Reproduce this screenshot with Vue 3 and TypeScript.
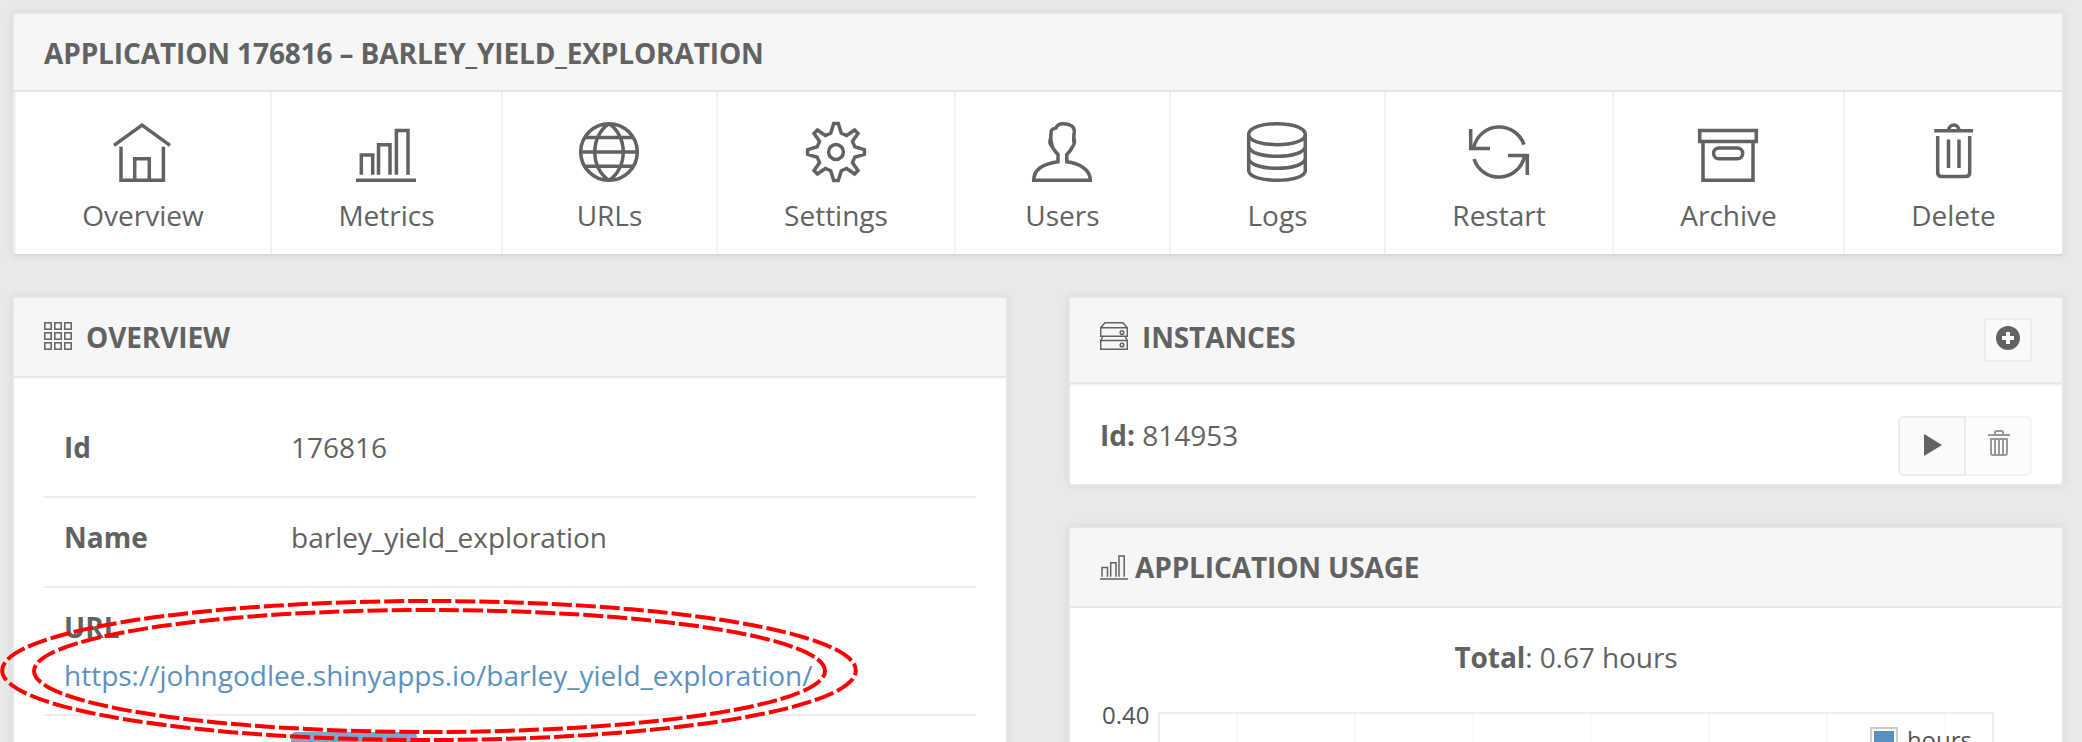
<script setup lang="ts">
interface NavItem {
  label: string
  icon: string
}

const navItems: NavItem[] = [
  { label: 'Overview', icon: 'M2 23.4L30 3.2L58 23.4M9 24.7V58.2H51.4V24.7M22.7 58V36.7H37.3V58' },
  { label: 'Metrics', icon: 'M0 58.2H60M5.3 52.7V33H16.7V52.7M22.5 52.7V22.7H34V52.7M40.4 52.7V8.5H52V52.7' },
  {
    label: 'URLs',
    icon: 'M30 1.7A28.3 28.3 0 1 0 30 58.3A28.3 28.3 0 1 0 30 1.7M30 1.7C11 14 11 46 30 58.3M30 1.7C49 14 49 46 30 58.3M6 15.5H54M1.7 30H58.3M6 44.3H54',
  },
  {
    label: 'Settings',
    icon: 'M27.7 1.6H32.3L35.3 11.3L40.7 13.5L48.6 8L52 11.4L46.5 19.3L48.7 24.7L58.4 27.7V32.3L48.7 35.3L46.5 40.7L52 48.6L48.6 52L40.7 46.5L35.3 48.7L32.3 58.4H27.7L24.7 48.7L19.3 46.5L11.4 52L8 48.6L13.5 40.7L11.3 35.3L1.6 32.3V27.7L11.3 24.7L13.5 19.3L8 11.4L11.4 8L19.3 13.5L24.7 11.3ZM30 22.6A7.4 7.4 0 1 0 30 37.4A7.4 7.4 0 1 0 30 22.6Z',
  },
  {
    label: 'Users',
    icon: 'M1.7 58.3C1.7 46 14 41.5 26 39.8V32.5C23.5 30 21.5 27.5 20.3 24.8C18 22.5 17.6 21 18 19L19.3 20.3C18.2 16 19 12 19.2 9.2C19.8 6.6 22 7 24 6C24.8 3.2 27 1.7 31 1.7C37.5 1.7 42.8 4 42.3 10C41.5 13.5 41.8 17 41.7 20.3L42.4 19C42.8 22 41.8 23.3 40 25.5C38.8 28.5 37 30.5 34.8 32.5V39.8C46 41.3 58.3 46.5 58.3 58.3Z',
  },
  {
    label: 'Logs',
    icon: 'M1.7 12.5C1.7 -2 58.3 -2 58.3 12.5C58.3 26 1.7 26 1.7 12.5V48.5C1.7 61.5 58.3 61.5 58.3 48.5V12.5M1.7 24C1.7 37.8 58.3 37.8 58.3 24M1.7 36C1.7 49.8 58.3 49.8 58.3 36',
  },
  {
    label: 'Restart',
    icon: 'M4.8 25A26.2 26.2 0 0 1 55 22.6M1.7 7V26.4H21M5 37A26.2 26.2 0 0 0 55.5 34.5M39 33.4H58.3V53',
  },
  {
    label: 'Archive',
    icon: 'M1.7 8.6H58.3V19.6H1.7ZM5 19.6V58.3H55V19.6M21 26H39.3A5.4 5.4 0 0 1 39.3 36.8H21A5.4 5.4 0 0 1 21 26Z',
  },
  {
    label: 'Delete',
    icon: 'M11.3 8.7H50.1M25.7 8.7C25.7 1.2 35.9 1.2 35.9 8.7M14.7 14V50.5Q14.7 54.5 18.7 54.5H42.7Q46.7 54.5 46.7 50.5V14M25.5 17.5V46M36 17.5V46',
  },
]

const gridLines: number[] = [77, 195, 313, 431, 549, 667, 785]
const cells: number[] = [0, 1, 2]
</script>

<template>
  <main class="page">
    <section class="panel app-panel">
      <header class="panel-head app-head">Application 176816 – barley_yield_exploration</header>
      <nav class="nav">
        <a v-for="item in navItems" :key="item.label" class="nav-item">
          <svg class="nav-icon" viewBox="0 0 60 60"><path :d="item.icon" /></svg>
          <span>{{ item.label }}</span>
        </a>
      </nav>
    </section>

    <div class="columns">
      <section class="panel overview">
        <header class="panel-head">
          <svg class="head-icon" viewBox="0 0 28 28">
            <template v-for="r in cells" :key="r">
              <rect v-for="c in cells" :key="c" :x="c * 10 + 0.8" :y="r * 10 + 0.8" width="6.4" height="6.4" />
            </template>
          </svg>
          <span class="title">Overview</span>
        </header>
        <div class="rows">
          <div class="row"><b class="key">Id</b><span>176816</span></div>
          <div class="row"><b class="key">Name</b><span>barley_yield_exploration</span></div>
          <div class="row url-row">
            <b class="key">URL</b>
            <a class="link">https://johngodlee.shinyapps.io/barley_yield_exploration/</a>
          </div>
          <div class="row status-row"><span class="status"></span></div>
        </div>
      </section>

      <div class="side">
        <section class="panel">
          <header class="panel-head tall">
            <svg class="head-icon" viewBox="0 0 28 28">
              <path d="M.7 5.8L5 .8H23L27.3 5.8V14.2H.7ZM.7 5.8H27.3M2.6 15L.7 18.6V27.3H27.3V18.6L25.4 15M.7 18.6H27.3" />
              <circle cx="22" cy="10.6" r="1.8" />
              <circle cx="22" cy="23" r="1.8" />
            </svg>
            <span class="title">Instances</span>
            <button class="add" type="button">
              <svg viewBox="0 0 24 24">
                <circle cx="12" cy="12" r="12" />
                <path d="M10 6h4v4h4v4h-4v4h-4v-4H6v-4h4z" />
              </svg>
            </button>
          </header>
          <div class="instance">
            <p><b>Id:</b> 814953</p>
            <div class="actions">
              <button class="act play" type="button">
                <svg viewBox="0 0 18 22"><path d="M0 0L18 11L0 22z" /></svg>
              </button>
              <button class="act trash" type="button">
                <svg viewBox="0 0 22 26">
                  <path d="M0 5H22M7 5V2.5Q7 1 8.500 1H13.500Q15 1 15 2.500V5M3 9H19V23Q19 25 17 25H5Q3 25 3 23ZM7 9V25M11 9V25M15 9V25" />
                </svg>
              </button>
            </div>
          </div>
        </section>

        <section class="panel usage">
          <header class="panel-head">
            <svg class="head-icon" viewBox="0 0 28 28">
              <path d="M0 27H28M2 24.700V15.600H7.500V24.700M10.700 24.700V10.700H16V24.700M19 24.700V4H24.200V24.700" />
            </svg>
            <span class="title close">Application Usage</span>
          </header>
          <p class="total"><b>Total</b>: 0.67 hours</p>
          <div class="chart">
            <span class="tick">0.40</span>
            <div class="plot">
              <svg class="grid" viewBox="0 0 832 200">
                <path v-for="x in gridLines" :key="x" :d="`M${x} 0V200`" />
              </svg>
              <div class="legend"><i class="swatch"></i><span class="series">hours</span></div>
            </div>
          </div>
        </section>
      </div>
    </div>

    <svg class="marker" viewBox="0 0 2082 742">
      <ellipse cx="429" cy="670.500" rx="426.800" ry="69.500" stroke-dashoffset="15" />
      <ellipse cx="429.500" cy="671" rx="395.500" ry="61" stroke-dashoffset="13" />
    </svg>
  </main>
</template>

<style>
body {
  margin: 0;
  overflow: hidden;
}
</style>

<style scoped>
.page {
  position: relative;
  box-sizing: border-box;
  width: 2082px;
  height: 742px;
  padding: 12px 18px 0 12px;
  overflow: hidden;
  background: #e9e9e9;
  color: #626262;
  font: 28px/40px 'Open Sans', 'Noto Sans', sans-serif;
}

p {
  margin: 0;
}

.panel {
  border: 2px solid #e6e6e6;
  border-radius: 4px;
  background: #fff;
  box-shadow: 0 0 8px rgba(0, 0, 0, 0.08);
}

.app-panel {
  height: 240px;
  width: 2048px;
  border-bottom: 2px solid #d9d9d9;
}

.panel-head {
  display: flex;
  box-sizing: border-box;
  height: 80px;
  padding: 19px 30px 0;
  border-bottom: 2px solid #e8e8e8;
  background: #f6f6f6;
  font-weight: 700;
  letter-spacing: -0.12px;
  text-transform: uppercase;
}

.app-head {
  height: 78px;
  border-bottom-color: #e4e4e4;
}

.nav {
  display: grid;
  grid-template-columns: 258px 231px 215px 238px 215px 215px 228px 231px 217px;
  height: 162px;
}

.nav-item {
  display: flex;
  flex-direction: column;
  align-items: center;
  box-sizing: border-box;
  padding-top: 30px;
  border-right: 2px solid #f2f2f2;
}

.nav-item:first-child {
  border-left: 2px solid #f2f2f2;
}

.nav-item:last-child {
  border-right: 0;
}

.nav-icon {
  width: 60px;
  height: 60px;
  margin: 0 1px 13px 0;
  overflow: visible;
  fill: none;
  stroke: #626262;
  stroke-width: 3.5;
}

.nav-item:first-child .nav-icon {
  margin-right: 2px;
}

.columns {
  display: flex;
  gap: 60px;
  margin-top: 40px;
}

.overview {
  width: 992px;
  height: 520px;
}

.side {
  width: 996px;
}

.head-icon {
  width: 28px;
  height: 28px;
  margin-top: 5px;
  fill: none;
  stroke: #626262;
  stroke-width: 1.5;
}

.title {
  margin-left: 14px;
}

.title.close {
  margin-left: 7px;
}

.rows {
  padding: 30px 30px 0;
}

.row {
  display: flex;
  box-sizing: border-box;
  height: 90px;
  padding: 19px 20px 0;
  border-bottom: 2px solid #eee;
}

.key {
  width: 227px;
}

.url-row {
  flex-direction: column;
  gap: 8px;
  height: 128px;
}

.link {
  color: #5b92bf;
}

.status-row {
  padding: 16px 0 0 247px;
}

.status {
  width: 126px;
  height: 40px;
  border-radius: 5px;
  background: #7ba7cf;
}

.tall {
  height: 86px;
}

.add {
  display: flex;
  justify-content: center;
  box-sizing: border-box;
  width: 48px;
  height: 44px;
  margin: 1px 0 0 auto;
  padding: 6px 0 0;
  border: 2px solid #ececec;
  border-radius: 4px;
  background: #fafafa;
}

.add svg {
  width: 24px;
  height: 24px;
  fill: #626262;
}

.add path {
  fill: #fff;
}

.instance {
  display: flex;
  justify-content: space-between;
  box-sizing: border-box;
  height: 100px;
  padding: 29px 30px 0;
  border-top: 2px solid #f4f4f4;
}

.actions {
  display: flex;
  margin-top: 1px;
}

.act {
  display: flex;
  align-items: center;
  justify-content: center;
  box-sizing: border-box;
  height: 60px;
  padding: 0;
  border: 2px solid #ececec;
  background: #fafafa;
}

.play {
  width: 68px;
  padding: 0 0 2px 2px;
  border-radius: 5px 0 0 5px;
}

.play svg {
  width: 18px;
  height: 22px;
  fill: #626262;
}

.trash {
  width: 66px;
  padding: 0 0 6px 2px;
  border-color: #f4f4f4;
  border-left: 0;
  border-radius: 0 5px 5px 0;
  background: #fcfcfc;
}

.trash svg {
  width: 22px;
  height: 26px;
  fill: none;
  stroke: #999;
  stroke-width: 2;
}

.usage {
  height: 260px;
  margin-top: 40px;
}

.total {
  padding-top: 29px;
  letter-spacing: -0.08px;
  text-align: center;
}

.chart {
  display: flex;
  padding: 35px 68px 0 32px;
}

.tick {
  flex: none;
  width: 56px;
  margin-top: -17px;
  color: #555;
  font-size: 24px;
}

.plot {
  position: relative;
  box-sizing: border-box;
  width: 836px;
  height: 204px;
  border: 2px solid #eee;
}

.grid {
  display: block;
  width: 832px;
  height: 200px;
  stroke: #f8f8f8;
  stroke-width: 2;
}

.legend {
  position: absolute;
  top: 13px;
  right: 20px;
  display: flex;
  color: #555;
  font-size: 24px;
  line-height: 32px;
}

.series {
  margin-top: -3px;
}

.swatch {
  box-sizing: border-box;
  width: 28px;
  height: 28px;
  margin-right: 9px;
  padding: 2px;
  border: 2px solid #ccc;
  background: #5b8fbf content-box;
}

.marker {
  position: absolute;
  top: 0;
  left: 0;
  width: 2082px;
  height: 742px;
  fill: none;
  stroke: #f00;
  stroke-width: 4;
  stroke-dasharray: 20 4;
  pointer-events: none;
}
</style>
